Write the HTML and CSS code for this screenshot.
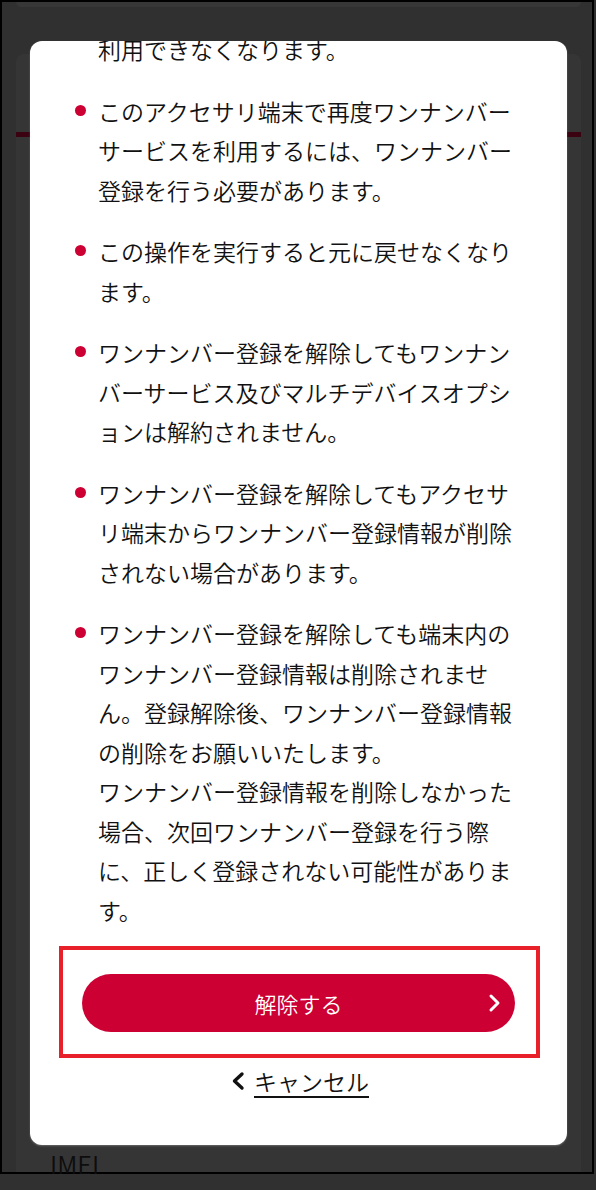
FILE: index.html
```html
<!DOCTYPE html>
<html lang="ja">
<head>
    <meta charset="UTF-8">
    <meta name="viewport" content="width=device-width, initial-scale=1.0">
    <title>ワンナンバー登録解除</title>
    <link rel="stylesheet" href="styles.css">
</head>
<body>

<div class="screen">
    <!-- 背面の端末情報ページ（オーバーレイで暗く表示） -->
    <div class="page">
        <div class="page-top"></div>
        <div class="card">
            <div class="card-head"></div>
            <div class="card-rule"></div>
            <div class="card-body"></div>
            <div class="imei">IMEI</div>
        </div>
    </div>
</div>

<div class="modal">
    <div class="modal-body">
        <ul class="notes">
            <li class="cont">利用できなくなります。</li>
            <li>このアクセサリ端末で再度ワンナンバーサービスを利用するには、ワンナンバー登録を行う必要があります。</li>
            <li>この操作を実行すると元に戻せなくなります。</li>
            <li>ワンナンバー登録を解除してもワンナンバーサービス及びマルチデバイスオプションは解約されません。</li>
            <li>ワンナンバー登録を解除してもアクセサリ端末からワンナンバー登録情報が削除されない場合があります。</li>
            <li>ワンナンバー登録を解除しても端末内のワンナンバー登録情報は削除されません。登録解除後、ワンナンバー登録情報の削除をお願いいたします。<br>ワンナンバー登録情報を削除しなかった場合、次回ワンナンバー登録を行う際に、正しく登録されない可能性があります。</li>
        </ul>

        <div class="action-focus">
            <button class="btn-primary" type="button">
                <span>解除する</span>
                <svg class="btn-arrow" width="14" height="20" viewBox="0 0 14 20">
                    <polyline points="3,3 10,10 3,17" fill="none" stroke="#fff" stroke-width="3" stroke-linecap="round" stroke-linejoin="round"/>
                </svg>
            </button>
        </div>

        <a class="cancel" href="#">
            <svg width="16" height="20" viewBox="0 0 16 20">
                <polyline points="12,3 4.5,10 12,17" fill="none" stroke="#111" stroke-width="3.4" stroke-linecap="round" stroke-linejoin="round"/>
            </svg>
            <span>キャンセル</span>
        </a>
    </div>
</div>

</body>
</html>
```

FILE: styles.css
```css
body {
    margin: 0;
    padding: 0;
    background-color: #303030;
    font-family: "Noto Sans CJK JP", "Noto Sans", sans-serif;
    font-weight: 350;
    color: #111;
}

.screen {
    width: 590px;
    height: 1170px;
    border: 2px solid #000;
    display: flex;
    flex-direction: column;
}

.page {
    flex: 1;
    margin-left: 14px;
    width: 565px;
    display: flex;
    flex-direction: column;
}

.page-top {
    height: 5px;
    background-color: #373737;
    border-radius: 0 0 8px 8px;
}

.card {
    flex: 1;
    margin-top: 47px;
    background-color: #353535;
    border-radius: 8px 8px 0 0;
    display: flex;
    flex-direction: column;
}

.card-head {
    height: 78px;
}

.card-rule {
    height: 5px;
    background-color: #3b0312;
}

.card-body {
    flex: 1;
}

.imei {
    padding-left: 34px;
    font-size: 25px;
    line-height: 30px;
    color: #0d0d0d;
    margin-bottom: -7px;
}

/* ダイアログ */
.modal {
    position: absolute;
    top: 41px;
    left: 30px;
    width: 537px;
    height: 1104px;
    background-color: #fff;
    border-radius: 12px;
    overflow: hidden;
    box-shadow: 0 1px 2px rgba(255, 255, 255, 0.25);
}

.modal-body {
    margin-top: -11px; /* スクロール位置 */
    padding: 0 27px 0 29px;
}

.notes {
    list-style: none;
    margin: 0;
    padding: 0;
    font-size: 23px;
    line-height: 39.5px;
}

.notes li {
    position: relative;
    padding: 0 22px 0 39px;
}

.notes li + li {
    margin-top: 22px;
}

.notes li::before {
    content: "";
    position: absolute;
    left: 16px;
    top: 13px;
    width: 11px;
    height: 11px;
    border-radius: 50%;
    background-color: #cc0033;
}

.notes li.cont::before {
    display: none;
}

.action-focus {
    margin-top: 16px;
    border: 4px solid #e8202a;
    padding: 24px 21px 22px 19px;
}

.btn-primary {
    position: relative;
    display: flex;
    align-items: center;
    justify-content: center;
    width: 100%;
    height: 58px;
    border: none;
    border-radius: 29px;
    background-color: #cc0033;
    color: #fff;
    font-family: inherit;
    font-weight: 350;
    font-size: 22px;
    padding: 0;
}

.btn-arrow {
    position: absolute;
    right: 13px;
    top: 19px;
}

.cancel {
    margin-top: 7px;
    display: flex;
    justify-content: center;
    align-items: center;
    gap: 8px;
    color: #111;
    text-decoration: none;
    font-size: 23px;
    line-height: 32px;
}

.cancel span {
    text-decoration: underline;
    text-decoration-thickness: 2px;
    text-underline-offset: 5px;
}
```
